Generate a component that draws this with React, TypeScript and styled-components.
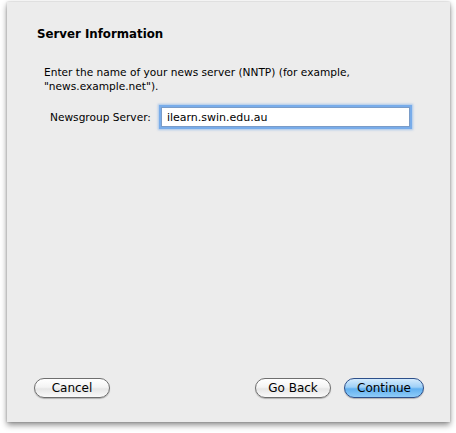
import styled, { createGlobalStyle } from 'styled-components'

const GlobalStyle = createGlobalStyle`
    html, body {
        margin: 0;
        padding: 0;
        background: #ffffff;
    }
    body {
        font-family: "DejaVu Sans", "Liberation Sans", sans-serif;
        color: #000000;
    }
`

export default function App() {
    return (
        <>
            <GlobalStyle />
            <Page>
                <Sheet>
                    <Content>
                        <Title>Server Information</Title>
                        <Intro>
                            Enter the name of your news server (NNTP) (for example,
                            <br />
                            "news.example.net").
                        </Intro>
                        <FieldRow>
                            <Label>Newsgroup Server:</Label>
                            <Input defaultValue="ilearn.swin.edu.au" />
                        </FieldRow>
                    </Content>
                    <Footer>
                        <PushButton>Cancel</PushButton>
                        <Spacer />
                        <PushButton>Go Back</PushButton>
                        <PushButton $primary>Continue</PushButton>
                    </Footer>
                </Sheet>
            </Page>
        </>
    )
}

const Page = styled.div`
    width: 456px;
    height: 433px;
    padding: 2px 6px 0 7px;
    box-sizing: border-box;
`

const Sheet = styled.div`
    height: 420px;
    background: #ececec;
    box-shadow: 0 3px 6px rgba(0, 0, 0, 0.45), 0 0 2px rgba(0, 0, 0, 0.2);
    display: flex;
    flex-direction: column;
`

const Content = styled.div`
    flex: 1;
    padding: 24px 0 0 30px;
`

const Title = styled.h1`
    margin: 0;
    font-size: 11.8px;
    font-weight: bold;
    line-height: 16px;
`

const Intro = styled.p`
    margin: 23px 0 0 7px;
    font-size: 10.6px;
    line-height: 14px;
`

const FieldRow = styled.div`
    display: flex;
    align-items: center;
    margin-top: 14px;
    padding-left: 13px;
    gap: 10px;
`

const Label = styled.label`
    font-size: 10.6px;
`

const Input = styled.input`
    width: 249px;
    height: 20px;
    box-sizing: border-box;
    padding: 0 5px;
    border: 1px solid #7a9cc8;
    outline: none;
    box-shadow: 0 0 0 2px #78acea, 0 0 2px 3px rgba(120, 172, 234, 0.6);
    font-family: "DejaVu Sans", "Liberation Sans", sans-serif;
    font-size: 11px;
    color: #000;
    background: #fff;
`

const Footer = styled.div`
    display: flex;
    align-items: center;
    gap: 13px;
    padding: 0 26px 24px 27px;
`

const Spacer = styled.div`
    flex: 1;
`

const PushButton = styled.button<{ $primary?: boolean }>`
    min-width: 76px;
    height: 20px;
    padding: 0 12px;
    border-radius: 10px;
    border: 1px solid ${p => (p.$primary ? '#2d4f8a' : '#6e6e6e')};
    background: ${p =>
        p.$primary
            ? 'linear-gradient(to bottom, #d4ebfd 0%, #9fd0f7 45%, #61b0f0 55%, #8fccf8 100%)'
            : 'linear-gradient(to bottom, #ffffff 0%, #f4f4f4 45%, #e6e6e6 55%, #fafafa 100%)'};
    box-shadow: 0 1px 1px rgba(0, 0, 0, 0.25);
    font-family: "DejaVu Sans", "Liberation Sans", sans-serif;
    font-size: 12px;
    color: #000;
    line-height: 18px;
`
